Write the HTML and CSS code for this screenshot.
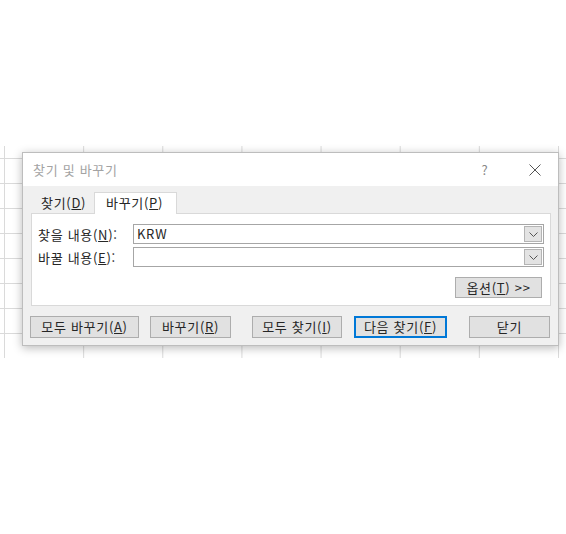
FILE: index.html
```html
<!DOCTYPE html>
<html lang="ko">
<head>
    <meta charset="UTF-8">
    <meta name="viewport" content="width=device-width, initial-scale=1.0">
    <title>찾기 및 바꾸기</title>
    <link rel="stylesheet" href="styles.css">
</head>
<body>
    <div class="sheet">
        <div class="dialog">
            <div class="titlebar">
                <span class="title">찾기 및 바꾸기</span>
                <span class="help">?</span>
                <span class="close">
                    <svg width="12" height="12" viewBox="0 0 12 12"><path d="M0.5 0.5 L11.5 11.5 M11.5 0.5 L0.5 11.5" stroke="#555" stroke-width="1" fill="none"/></svg>
                </span>
            </div>
            <div class="body">
                <div class="tabs">
                    <div class="tab">찾기(<u>D</u>)</div>
                    <div class="tab active">바꾸기(<u>P</u>)</div>
                </div>
                <div class="panel">
                    <div class="row">
                        <label class="label">찾을 내용(<u>N</u>):</label>
                        <div class="combo">
                            <span class="value">KRW</span>
                            <span class="drop"><svg width="9" height="5" viewBox="0 0 9 5"><path d="M0.5 0.5 L4.5 4.5 L8.5 0.5" stroke="#555" fill="none"/></svg></span>
                        </div>
                    </div>
                    <div class="row second">
                        <label class="label">바꿀 내용(<u>E</u>):</label>
                        <div class="combo">
                            <span class="value"></span>
                            <span class="drop"><svg width="9" height="5" viewBox="0 0 9 5"><path d="M0.5 0.5 L4.5 4.5 L8.5 0.5" stroke="#555" fill="none"/></svg></span>
                        </div>
                    </div>
                    <div class="options-row">
                        <button class="btn options">옵션(<u>T</u>) &gt;&gt;</button>
                    </div>
                </div>
                <div class="actions">
                    <button class="btn b-all">모두 바꾸기(<u>A</u>)</button>
                    <button class="btn b-replace">바꾸기(<u>R</u>)</button>
                    <button class="btn b-findall">모두 찾기(<u>I</u>)</button>
                    <button class="btn b-next default">다음 찾기(<u>F</u>)</button>
                    <button class="btn b-close">닫기</button>
                </div>
            </div>
        </div>
    </div>
</body>
</html>
```

FILE: styles.css
```css
body {
    margin: 0;
    background: #fff;
    font-family: "Noto Sans CJK KR", "Noto Sans", sans-serif;
    font-size: 13px;
    letter-spacing: 0.7px;
    color: #262626;
}
.sheet {
    margin-top: 146px;
    height: 212px;
    padding: 6px 0 0 22px;
    box-sizing: border-box;
    background-image:
        linear-gradient(to right, #dadada 1px, transparent 1px),
        linear-gradient(to bottom, #dadada 1px, transparent 1px);
    background-size: 79.15px 25px;
    background-position: 4px 0, 0 12px;
}
.dialog {
    width: 535px;
    border: 1px solid #bdbdbd;
    background: #f0f0f0;
    box-shadow: 0 2px 9px rgba(0, 0, 0, 0.28);
}
.titlebar {
    height: 33px;
    background: #fff;
    display: flex;
    align-items: center;
    padding-left: 10px;
}
.title {
    color: #a3a3a3;
    flex: 1;
}
.help {
    color: #888;
    width: 12px;
    text-align: center;
    margin-right: 38px;
}
.close {
    width: 12px;
    height: 12px;
    margin-right: 17px;
    display: flex;
}
.body {
    padding: 6px 7px 7px 8px;
}
.tabs {
    display: flex;
    height: 21px;
    position: relative;
    z-index: 1;
}
.tab {
    height: 21px;
    line-height: 21px;
    box-sizing: border-box;
    padding-left: 10px;
    width: 63px;
}
.tab.active {
    width: 83px;
    padding-left: 11px;
    background: #fff;
    border: 1px solid #d9d9d9;
    border-bottom: none;
    height: 22px;
    line-height: 20px;
}
.panel {
    background: #fff;
    border: 1px solid #d9d9d9;
    padding: 10px 6px 9px 6px;
    height: 93px;
    box-sizing: border-box;
}
.row {
    display: flex;
    align-items: center;
    height: 20px;
}
.row.second {
    margin-top: 3px;
}
.label {
    width: 95px;
}
.combo {
    flex: 1;
    height: 20px;
    box-sizing: border-box;
    border: 1px solid #a6a6a6;
    display: flex;
    align-items: center;
}
.value {
    flex: 1;
    padding-left: 3px;
    line-height: 18px;
}
.drop {
    width: 18px;
    height: 16px;
    margin-right: 1px;
    background: #e3e3e3;
    border: 1px solid #b4b4b4;
    box-sizing: border-box;
    display: flex;
    align-items: center;
    justify-content: center;
}
.options-row {
    display: flex;
    justify-content: flex-end;
    margin-top: 10px;
    padding-right: 2px;
}
.btn {
    font-family: inherit;
    font-size: 13px;
    letter-spacing: 0.7px;
    color: #262626;
    background: #e1e1e1;
    border: 1px solid #adadad;
    height: 22px;
    padding: 0;
    line-height: 20px;
    text-align: center;
}
.options {
    width: 87px;
    height: 21px;
    line-height: 19px;
}
.actions {
    display: flex;
    margin-top: 10px;
    margin-left: -1px;
}
.b-all { width: 109px; }
.b-replace { width: 81px; margin-left: 11px; }
.b-findall { width: 90px; margin-left: 21px; }
.b-next { width: 93px; margin-left: 12px; }
.b-close { width: 81px; margin-left: 22px; }
.default {
    border-color: #0078d7;
    box-shadow: inset 0 0 0 1px #0078d7;
}
```
